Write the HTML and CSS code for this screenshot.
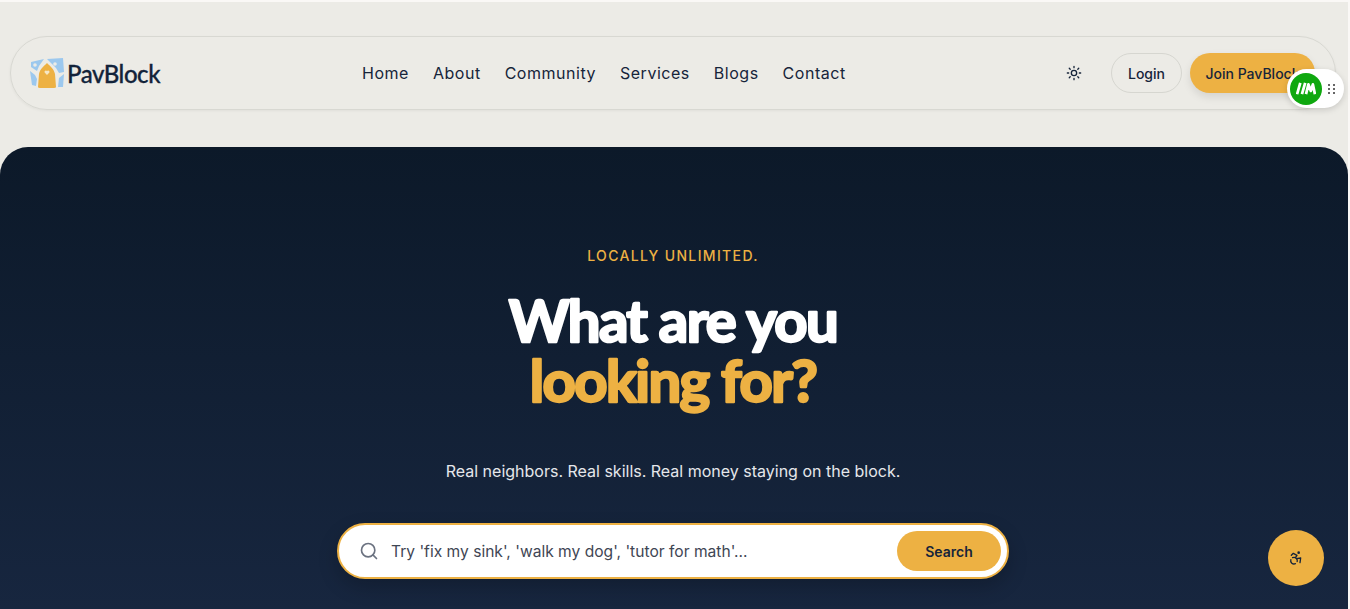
FILE: index.html
```html
<!DOCTYPE html>
<html lang="en">
<head>
    <meta charset="UTF-8">
    <meta name="viewport" content="width=device-width, initial-scale=1.0">
    <title>PavBlock</title>
    <link rel="stylesheet" href="styles.css">
</head>
<body>
    <div class="page">
        <header class="site-header">
            <nav class="nav-pill">
                <a class="logo" href="#">
                    <svg class="logo-mark" viewBox="0 0 34 30" width="34" height="30">
                        <path d="M1 4 L14 1 L9 8 L7 13 L1 9 Z" fill="#9cc8ee"/>
                        <path d="M0 13 L5 17 L7 21 L6 28 L2 27 Z" fill="#9cc8ee"/>
                        <path d="M17 1 L33 0 L34 14 L29 15 L26 10 L22 6 Z" fill="#9cc8ee"/>
                        <path d="M29 20 L34 16 L33 29 L28 29 Z" fill="#9cc8ee"/>
                        <circle cx="5" cy="7" r="1.8" fill="#ecebe6"/>
                        <circle cx="25" cy="6" r="1.8" fill="#ecebe6"/>
                        <path d="M8 29 L9 16 C10 11 14 8 17 5 C20 8 24 11 25 16 L26 29 Q26 30 24 30 L10 30 Q8 30 8 29 Z" fill="#edb143"/>
                        <path d="M17 17 L14.6 14.4 A1.4 1.4 0 0 1 17 13 A1.4 1.4 0 0 1 19.4 14.4 Z" fill="#f6e7c4"/>
                    </svg>
                    <span class="logo-text">PavBlock</span>
                </a>
                <ul class="nav-links">
                    <li><a href="#">Home</a></li>
                    <li><a href="#">About</a></li>
                    <li><a href="#">Community</a></li>
                    <li><a href="#">Services</a></li>
                    <li><a href="#">Blogs</a></li>
                    <li><a href="#">Contact</a></li>
                </ul>
                <div class="nav-actions">
                    <svg class="theme-icon" viewBox="0 0 24 24" width="16" height="16" fill="none" stroke="#16243a" stroke-width="2" stroke-linecap="round">
                        <circle cx="12" cy="12" r="4"/>
                        <path d="M12 2v2M12 20v2M4.9 4.9l1.4 1.4M17.7 17.7l1.4 1.4M2 12h2M20 12h2M4.9 19.1l1.4-1.4M17.7 6.3l1.4-1.4"/>
                    </svg>
                    <a class="btn btn-login" href="#">Login</a>
                    <a class="btn btn-join" href="#">Join PavBlock</a>
                </div>
            </nav>
        </header>

        <main class="hero">
            <p class="eyebrow">LOCALLY UNLIMITED.</p>
            <h1 class="hero-title">
                <svg viewBox="0 0 400 124" width="400" height="124">
                    <text class="title-line" x="200" y="51">What are you</text>
                    <text class="title-line accent" x="200" y="111">looking for?</text>
                </svg>
            </h1>
            <p class="hero-sub">Real neighbors. Real skills. Real money staying on the block.</p>
            <form class="search-bar">
                <svg class="search-icon" viewBox="0 0 24 24" width="20" height="20" fill="none" stroke="#6b7280" stroke-width="2" stroke-linecap="round">
                    <circle cx="11" cy="11" r="8"/>
                    <path d="M21 21l-4.3-4.3"/>
                </svg>
                <span class="search-text">Try 'fix my sink', 'walk my dog', 'tutor for math'...</span>
                <button class="search-btn" type="button">Search</button>
            </form>
        </main>
    </div>

    <!-- floating widgets -->
    <div class="ext-widget">
        <span class="ext-badge">
            <svg viewBox="0 0 24 16" width="20" height="13" fill="none" stroke="#fff" stroke-width="3.4" stroke-linejoin="round">
                <path d="M1 15L5 1M7 15L11 1M12 15L15 3L18 11L20.5 3L23 15"/>
            </svg>
        </span>
        <span class="ext-grip"><i></i><i></i><i></i><i></i><i></i><i></i></span>
    </div>
    <button class="a11y-btn" type="button">
        <svg viewBox="0 0 24 24" width="16" height="16" fill="none" stroke="#16243a" stroke-width="2" stroke-linecap="round" stroke-linejoin="round">
            <circle cx="16" cy="4" r="1"/>
            <path d="m18 19 1-7-6 1"/>
            <path d="m5 8 3-3 5.5 3-2.36 3.5"/>
            <path d="M4.24 14.5a5 5 0 0 0 6.88 6"/>
            <path d="M13.76 17.5a5 5 0 0 0-6.88-6"/>
        </svg>
    </button>
</body>
</html>
```

FILE: styles.css
```css
* {
    box-sizing: border-box;
}
body {
    margin: 0;
    height: 609px;
    overflow: hidden;
    padding: 2px 2px 0 0;
    background: #faf8f6;
    font-family: "Inter", sans-serif;
    color: #16243a;
}
a {
    color: inherit;
    text-decoration: none;
}

.page {
    height: 607px;
    background: #ecebe6;
}
.site-header {
    padding: 34px 12px 37px 10px;
}
.nav-pill {
    display: flex;
    align-items: center;
    height: 74px;
    padding: 0 20px 0 19px;
    border: 1px solid #d8d8d2;
    border-radius: 37px;
    box-shadow: 0 1px 3px rgba(0,0,0,0.05);
}
.logo {
    display: flex;
    align-items: center;
    gap: 3px;
    width: 332px;
}
.logo-text {
    font-family: "Lato", sans-serif;
    font-size: 24px;
    letter-spacing: -0.45px;
    font-weight: 500;
    color: #12233a;
    -webkit-text-stroke: 0.3px currentColor;
}
.nav-links {
    display: flex;
    gap: 24px;
    margin: 0;
    padding: 0;
    list-style: none;
    font-size: 16px;
    font-weight: 400;
    letter-spacing: 0.52px;
    color: #16243a;
}
.nav-actions {
    display: flex;
    align-items: center;
    margin-left: auto;
}
.theme-icon {
    margin-right: 29px;
}
.btn {
    display: flex;
    align-items: center;
    justify-content: center;
    height: 40px;
    border-radius: 20px;
    font-size: 14px;
    font-weight: 500;
}
.btn-login {
    width: 71px;
    border: 1px solid #d6d6d0;
}
.btn-join {
    width: 125px;
    margin-left: 8px;
    background: #edb143;
    box-shadow: 0 4px 8px rgba(0,0,0,0.1);
}

.hero {
    display: flex;
    flex-direction: column;
    align-items: center;
    height: 462px;
    padding: 100px 2px 0 0;
    background: linear-gradient(180deg, #0c1929, #17263f);
    border-radius: 28px 28px 0 0;
}
.eyebrow {
    margin: 0;
    font-size: 14px;
    line-height: 18px;
    font-weight: 500;
    letter-spacing: 1.35px;
    color: #edb143;
}
.hero-title {
    margin: 26px 0 0;
    height: 124px;
    font-weight: 400;
}
.hero-title svg {
    display: block;
    overflow: visible;
}
.title-line {
    font-family: "Lato", sans-serif;
    font-size: 58px;
    font-weight: 700;
    letter-spacing: -1.6px;
    text-anchor: middle;
    fill: #fff;
    stroke: #fff;
    stroke-width: 2.5px;
    stroke-linejoin: round;
}
.title-line.accent {
    fill: #edb143;
    stroke: #edb143;
}
.hero-sub {
    margin: 44px 0 0;
    font-size: 16px;
    line-height: 24px;
    color: #e5e7eb;
}
.search-bar {
    display: flex;
    align-items: center;
    width: 672px;
    height: 56px;
    margin-top: 40px;
    padding: 0 6px 0 20px;
    background: #fff;
    border: 2px solid #edb143;
    border-radius: 28px;
    box-shadow: 0 8px 20px rgba(0,0,0,0.2);
}
.search-text {
    margin-left: 12px;
    font-size: 15.6px;
    color: #3f4654;
}
.search-btn {
    width: 104px;
    height: 40px;
    margin-left: auto;
    border: none;
    border-radius: 20px;
    background: #edb143;
    font-family: inherit;
    font-size: 14px;
    font-weight: 600;
    color: #16243a;
}

.ext-widget {
    position: absolute;
    top: 69px;
    left: 1287px;
    display: flex;
    align-items: center;
    width: 57px;
    height: 39px;
    padding-left: 3px;
    background: #fff;
    border-radius: 20px;
    box-shadow: 0 2px 6px rgba(0,0,0,0.15);
}
.ext-badge {
    display: flex;
    align-items: center;
    justify-content: center;
    width: 32px;
    height: 32px;
    border-radius: 50%;
    background: #0fa80f;
}
.ext-grip {
    display: grid;
    grid-template-columns: 2px 2px;
    gap: 2px 3px;
    margin-left: 6px;
}
.ext-grip i {
    width: 2px;
    height: 2px;
    background: #666;
}
.a11y-btn {
    position: absolute;
    top: 530px;
    left: 1268px;
    display: flex;
    align-items: center;
    justify-content: center;
    width: 56px;
    height: 56px;
    padding: 0;
    border: none;
    border-radius: 50%;
    background: #edb143;
}
```
